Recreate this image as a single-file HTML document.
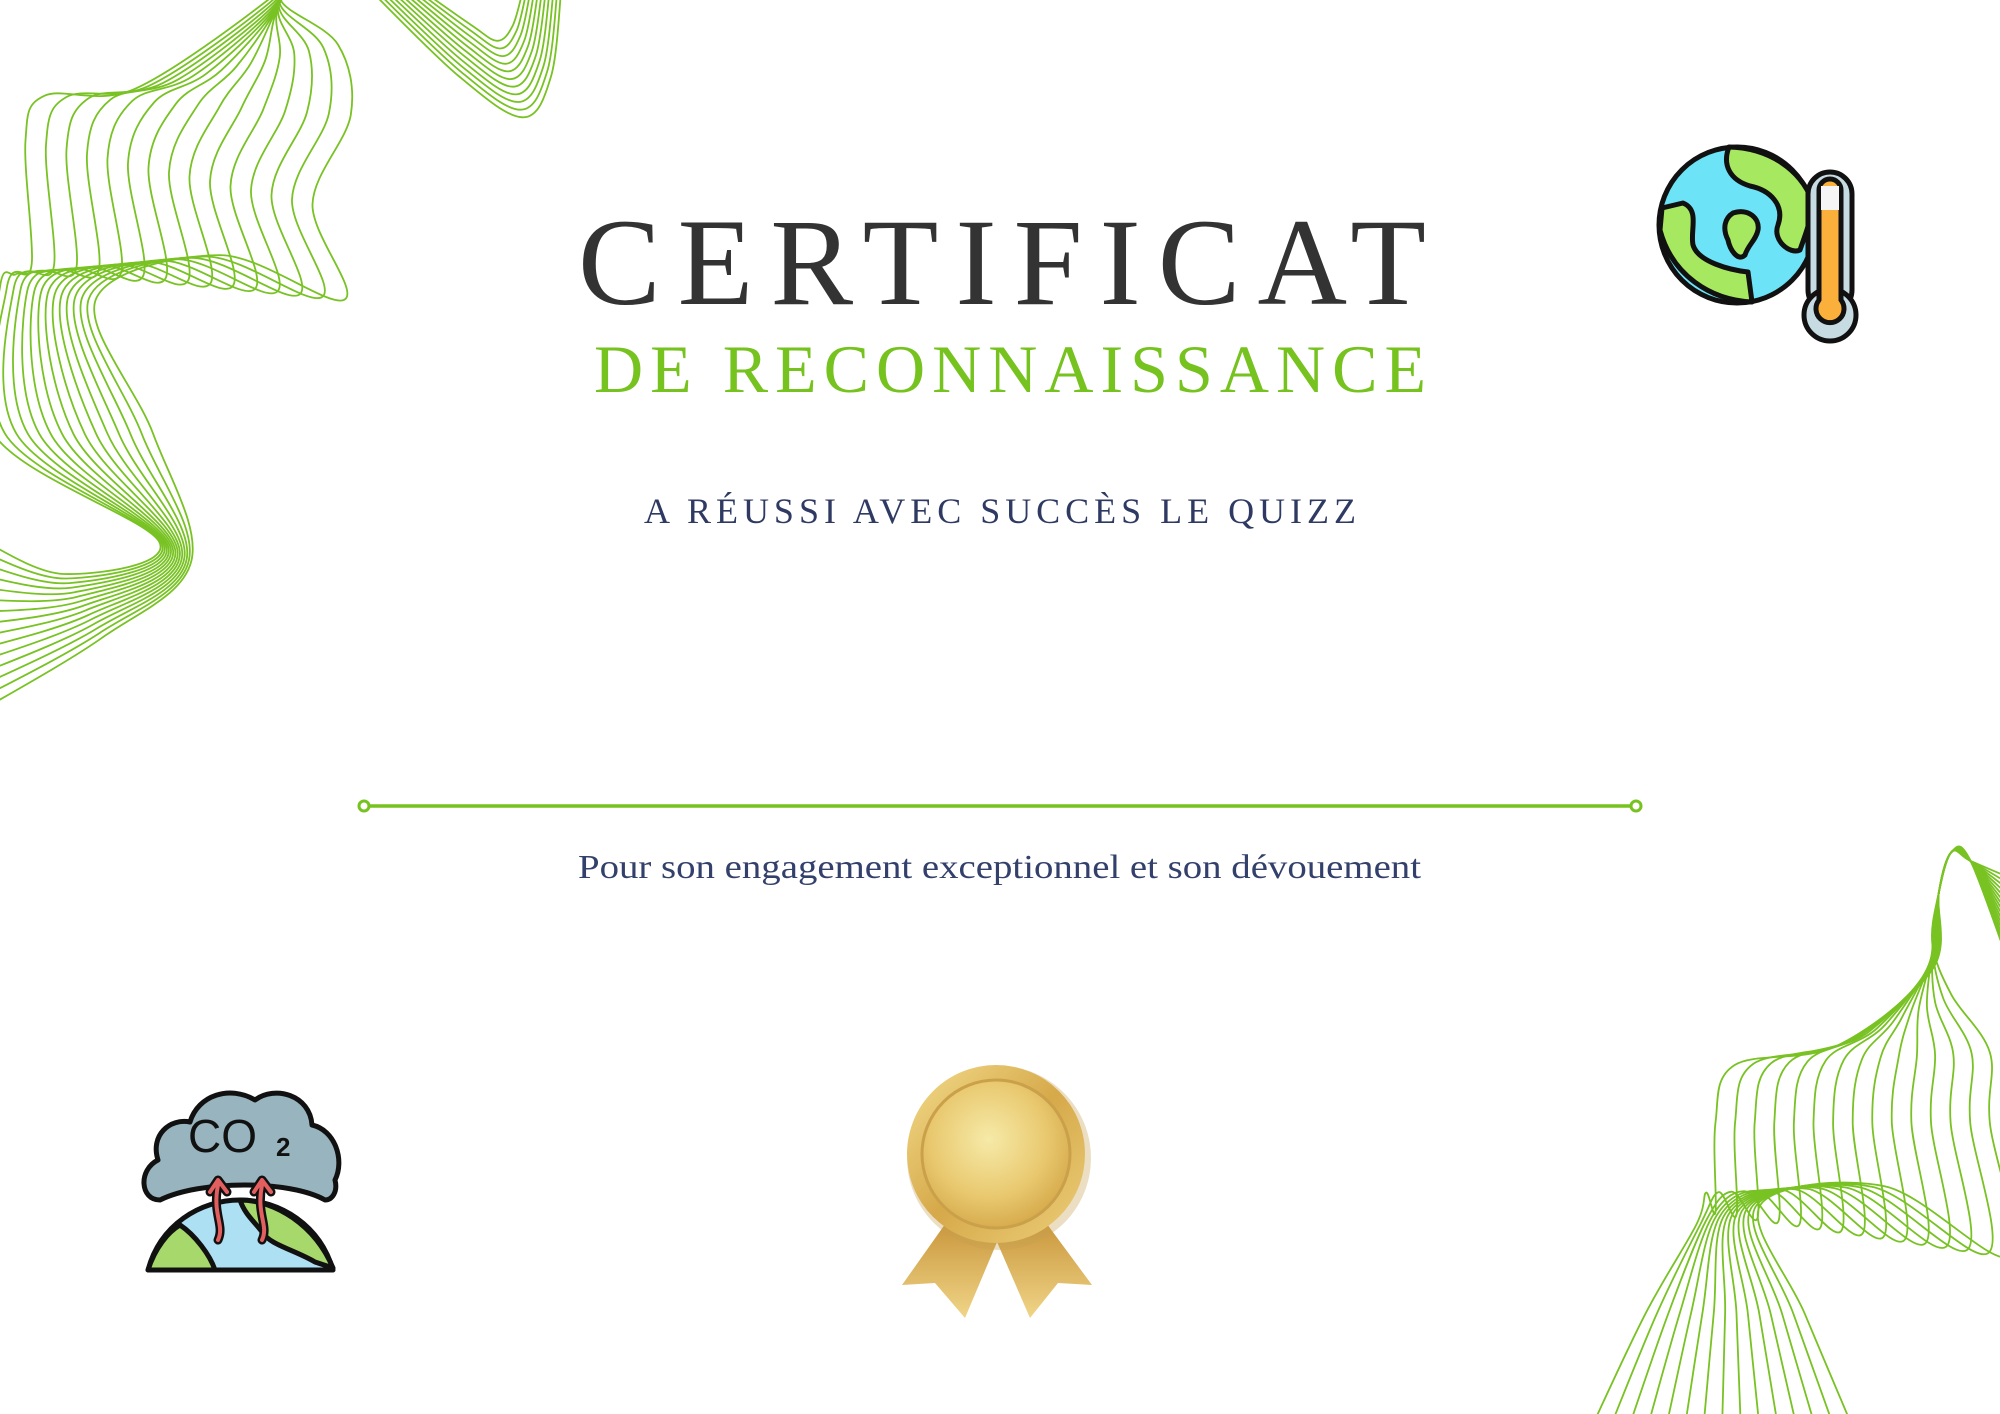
<!DOCTYPE html>
<html><head><meta charset="utf-8"><style>
html,body{margin:0;padding:0;background:#fff;}
body{width:2000px;height:1414px;overflow:hidden;position:relative;}
svg{position:absolute;left:0;top:0;}
</style></head><body>
<svg id="s" width="2000" height="1414" viewBox="0 0 2000 1414" xmlns="http://www.w3.org/2000/svg">
<defs>
<radialGradient id="gold" cx="0.45" cy="0.4" r="0.7">
<stop offset="0" stop-color="#f6eaa8"/><stop offset="0.55" stop-color="#e9c970"/><stop offset="1" stop-color="#cf9f3e"/></radialGradient>
<linearGradient id="gold2" x1="0" y1="0" x2="1" y2="1">
<stop offset="0" stop-color="#f3dc8c"/><stop offset="0.5" stop-color="#d6a94a"/><stop offset="1" stop-color="#eccf7a"/></linearGradient>
<linearGradient id="rib" x1="0" y1="0" x2="0" y2="1">
<stop offset="0" stop-color="#c8953a"/><stop offset="1" stop-color="#f0d588"/></linearGradient>
</defs>
<g id="waves" fill="none" stroke="#78c223" stroke-width="1.8"></g>

<text x="578" y="304" textLength="848" lengthAdjust="spacing" font-family="Liberation Serif, serif" font-size="124" fill="#333333">CERTIFICAT</text>
<text x="594" y="392" textLength="832" lengthAdjust="spacing" font-family="Liberation Serif, serif" font-size="68" fill="#76c21f">DE RECONNAISSANCE</text>
<text x="644" y="523" textLength="712" lengthAdjust="spacing" font-family="Liberation Serif, serif" font-size="36" fill="#2f3a63">A RÉUSSI AVEC SUCCÈS LE QUIZZ</text>
<text x="578" y="878" textLength="843" lengthAdjust="spacingAndGlyphs" font-family="Liberation Serif, serif" font-size="34" fill="#33406b">Pour son engagement exceptionnel et son dévouement</text>

<line x1="369" y1="806" x2="1630" y2="806" stroke="#76c21f" stroke-width="3.5"/>
<circle cx="364" cy="806" r="5" fill="#fff" stroke="#76c21f" stroke-width="3"/>
<circle cx="1636" cy="806" r="5" fill="#fff" stroke="#76c21f" stroke-width="3"/>

<g>
<path d="M948 1220 L902 1285 L935 1283 L965 1318 L1000 1235 Z" fill="url(#rib)"/>
<path d="M1044 1220 L1092 1285 L1058 1283 L1030 1318 L994 1235 Z" fill="url(#rib)"/>
<circle cx="999" cy="1158" r="92" fill="#c6a050" opacity="0.35"/>
<circle cx="996" cy="1154" r="89" fill="url(#gold2)"/>
<circle cx="996" cy="1154" r="74" fill="url(#gold)" stroke="#caa14a" stroke-width="3"/>
</g>

<g stroke="#111" stroke-width="5" stroke-linejoin="round" stroke-linecap="round">
<circle cx="1737" cy="225" r="78" fill="#6ce3f7"/>
<path d="M1729 147 C1722 165 1730 180 1750 186 C1770 190 1785 205 1778 225 C1772 240 1790 255 1800 250 C1805 235 1812 220 1812 200 C1800 170 1770 148 1729 147 Z" fill="#a6e860"/>
<path d="M1662 208 L1683 203 C1700 210 1690 230 1693 245 C1698 262 1730 270 1748 272 L1752 302 C1710 300 1672 275 1660 230 Z" fill="#a6e860"/>
<path d="M1733 213 C1748 208 1760 218 1758 230 C1756 240 1748 245 1745 255 C1738 262 1730 250 1728 240 C1722 228 1725 218 1733 213 Z" fill="#a6e860"/>
<rect x="1808" y="172" width="44" height="140" rx="22" fill="#c7dbe2"/>
<circle cx="1830" cy="315" r="26" fill="#c7dbe2"/>
<path d="M1819 190 L1819 300 A14 14 0 1 0 1841 300 L1841 190 A11 11 0 0 0 1819 190 Z" fill="#fbb03b"/>
<path d="M1821 186 L1839 186 L1839 210 L1821 210 Z" fill="#f5f5f5" stroke="none"/>
</g>

<g stroke="#111" stroke-width="5" stroke-linejoin="round" stroke-linecap="round">
<path d="M160 1200 C140 1200 138 1170 158 1160 C150 1135 170 1118 190 1122 C198 1095 230 1085 255 1100 C275 1085 310 1095 312 1125 C335 1130 345 1160 335 1180 C338 1192 332 1200 325 1200 C290 1180 200 1180 160 1200 Z" fill="#98b4bf"/>
<path d="M148 1270 C160 1225 200 1200 240 1200 C280 1200 320 1225 333 1270 Z" fill="#aee0f3"/>
<path d="M148 1270 C155 1248 168 1232 180 1225 C195 1235 210 1255 215 1270 Z" fill="#a6d86c"/>
<path d="M240 1200 C275 1200 315 1225 333 1268 L315 1262 C295 1250 270 1245 262 1232 C255 1222 245 1215 240 1200 Z" fill="#a6d86c"/>
<path d="M218 1240 C225 1225 212 1215 218 1185 M210 1192 L218 1180 L227 1192" fill="none" stroke="#111" stroke-width="9"/>
<path d="M218 1240 C225 1225 212 1215 218 1185 M210 1192 L218 1180 L227 1192" fill="none" stroke="#e35f5f" stroke-width="4"/>
<path d="M262 1240 C269 1225 256 1215 262 1185 M254 1192 L262 1180 L271 1192" fill="none" stroke="#111" stroke-width="9"/>
<path d="M262 1240 C269 1225 256 1215 262 1185 M254 1192 L262 1180 L271 1192" fill="none" stroke="#e35f5f" stroke-width="4"/>
<text x="188" y="1152" font-family="Liberation Sans, sans-serif" font-size="46" fill="#111" stroke="none">CO</text>
<text x="276" y="1156" font-family="Liberation Sans, sans-serif" font-size="26" font-weight="bold" fill="#111" stroke="none">2</text>
</g>
</svg>
<script>
(function(){
var g=document.getElementById('waves');
var F=1.2755;
function cr(pts){
  var d='M'+pts[0][0].toFixed(1)+' '+pts[0][1].toFixed(1);
  for(var i=0;i<pts.length-1;i++){
    var p0=pts[i-1]||pts[i],p1=pts[i],p2=pts[i+1],p3=pts[i+2]||p2;
    var c1=[p1[0]+(p2[0]-p0[0])/6,p1[1]+(p2[1]-p0[1])/6];
    var c2=[p2[0]-(p3[0]-p1[0])/6,p2[1]-(p3[1]-p1[1])/6];
    d+=' C'+c1[0].toFixed(1)+' '+c1[1].toFixed(1)+' '+c2[0].toFixed(1)+' '+c2[1].toFixed(1)+' '+p2[0].toFixed(1)+' '+p2[1].toFixed(1);
  }
  return d;
}
function add(pts){
  var p=pts.map(function(q){return [q[0]*F,q[1]*F];});
  var e=document.createElementNS('http://www.w3.org/2000/svg','path');
  e.setAttribute('d',cr(p));g.appendChild(e);
}
var N=15,k,s;
// top-left (display coords)
for(k=0;k<N;k++){s=k/(N-1);
  var cx=[75-75*s,235-10*s], cb=[270-245*s,235-30*s];
  add([[-20,560-140*s],[80-30*s,500-50*s],[150-25*s,440-15*s],[120-125*s,340],cx,
       [(cx[0]+cb[0])/2,200+15*s],cb,[245-225*s,160-50*s],[275-240*s,90-15*s],
       [265-160*s,35+35*s],[220-10*s,0+40*s*(1-s)],[235,-30]]);
}
for(k=0;k<11;k++){
  add([[290+4*k,-8],[360+k,60-4*k],[410-2*k,92-6*k],[432-3*k,60-4*k],[440-3*k,-8]]);
}
// bottom-right
for(k=0;k<N;k++){s=k/(N-1);
  var c2=[1330+50*s,960-15*s], b2=[1345+230*s,950+35*s];
  add([[1245+210*s,1125],[1290+125*s,1030],c2,[(c2[0]+b2[0])/2,935-5*s],b2,
       [1345+215*s,880],[1360+200*s,835-10*s],[1440+90*s,820-40*s],[1515,760-20*s],
       [1520,700],[1530,668],[1545,675],[1580,690+80*s]]);
}
})();
</script>
</body></html>
